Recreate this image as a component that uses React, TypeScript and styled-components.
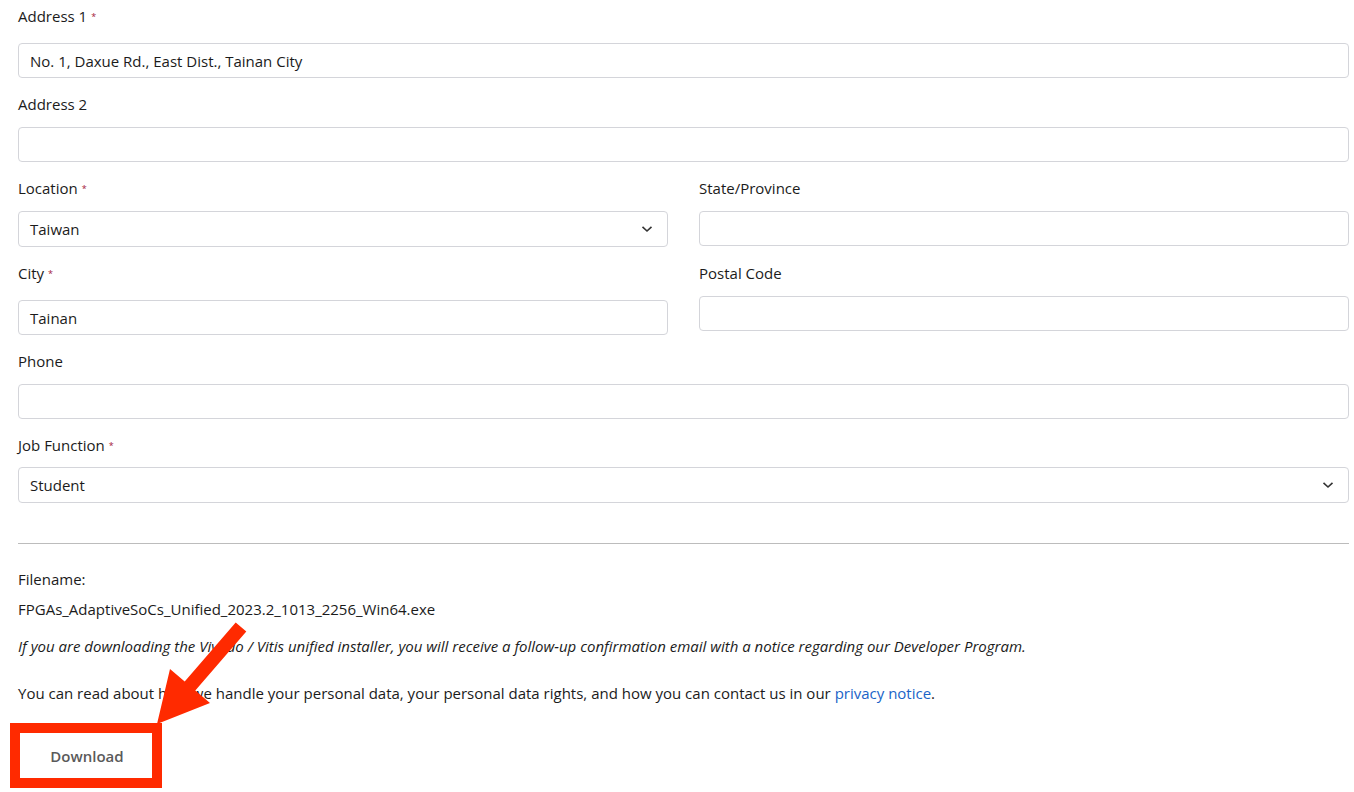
import { createGlobalStyle } from 'styled-components';
import styled from 'styled-components';

const GlobalStyle = createGlobalStyle`
	html, body {
		margin: 0;
		padding: 0;
		background: #ffffff;
	}
	body {
		font-family: "Open Sans", "Noto Sans", "Liberation Sans", sans-serif;
		font-size: 15px;
		color: #1b1b1b;
	}
`;

const Page = styled.div`
	position: relative;
	padding: 5px 5px 0 18px;
	width: 1354px;
	box-sizing: border-box;
`;

const Field = styled.div`
	display: flex;
	flex-direction: column;
	margin-bottom: 15px;
`;

const Row = styled.div`
	display: grid;
	grid-template-columns: 1fr 1fr;
	column-gap: 31px;
`;

const Label = styled.label<{ $required?: boolean; $tight?: boolean }>`
	display: block;
	line-height: 22px;
	margin-bottom: ${({ $required, $tight }) => ($tight ? '10px' : $required ? '15px' : '12px')};
	color: #1b1b1b;
`;

const Star = styled.span`
	color: #a3173a;
	font-size: 9px;
	margin-left: 4px;
	vertical-align: 2px;
`;

const TextInput = styled.div`
	box-sizing: border-box;
	height: 35px;
	border: 1px solid #d4d5da;
	border-radius: 4px;
	padding: 0 11px;
	display: flex;
	align-items: center;
	color: #1b1b1b;
	background: #fff;
`;

const SelectBox = styled(TextInput)`
	justify-content: space-between;
	padding-right: 14px;
	height: 36px;
`;

const Divider = styled.hr`
	border: none;
	border-top: 1px solid #bcbcbc;
	margin: 40px 0 24px;
`;

const Text = styled.p<{ $gap?: number }>`
	margin: 0 0 ${({ $gap }) => $gap ?? 8}px;
	line-height: 22px;
`;

const Note = styled(Text)`
	font-style: italic;
`;

const Link = styled.a`
	color: #1a64c8;
	text-decoration: none;
`;

const Frame = styled.span`
	display: inline-block;
	margin-left: -8px;
	margin-top: 19px;
	border: 10px solid #ff2a00;
	line-height: 0;
`;

const DownloadButton = styled.button`
	width: 132px;
	height: 45px;
	border: none;
	background: #ffffff;
	color: #5a5a5a;
	font-family: "Open Sans", "Noto Sans", sans-serif;
	font-size: 15px;
	font-weight: 600;
	padding: 0 0 0 2px;
	cursor: pointer;
`;

const Arrow = styled.svg`
	position: absolute;
	left: 0;
	top: 0;
	pointer-events: none;
`;

function Chevron() {
	return (
		<svg width="12" height="8" viewBox="0 0 12 8">
			<polyline points="1.5,1.8 6,6 10.5,1.8" fill="none" stroke="#333" strokeWidth="1.6" />
		</svg>
	);
}

export default function App() {
	return (
		<>
			<GlobalStyle />
			<Page>
				<Field>
					<Label $required>Address 1<Star>*</Star></Label>
					<TextInput>No. 1, Daxue Rd., East Dist., Tainan City</TextInput>
				</Field>
				<Field>
					<Label>Address 2</Label>
					<TextInput />
				</Field>
				<Row>
					<Field>
						<Label $required style={{ marginBottom: 11 }}>Location<Star>*</Star></Label>
						<SelectBox>Taiwan<Chevron /></SelectBox>
					</Field>
					<Field>
						<Label>State/Province</Label>
						<TextInput />
					</Field>
				</Row>
				<Row>
					<Field>
						<Label $required>City<Star>*</Star></Label>
						<TextInput>Tainan</TextInput>
					</Field>
					<Field>
						<Label>Postal Code</Label>
						<TextInput />
					</Field>
				</Row>
				<Field>
					<Label>Phone</Label>
					<TextInput />
				</Field>
				<Field>
					<Label $required $tight>Job Function<Star>*</Star></Label>
					<SelectBox>Student<Chevron /></SelectBox>
				</Field>

				<Divider />

				<Text>Filename:</Text>
				<Text $gap={15}>FPGAs_AdaptiveSoCs_Unified_2023.2_1013_2256_Win64.exe</Text>
				<Note $gap={25}>
					If you are downloading the Vivado / Vitis unified installer, you will receive a follow-up confirmation email with a notice regarding our Developer Program.
				</Note>
				<Text $gap={0}>
					You can read about how we handle your personal data, your personal data rights, and how you can contact us in our <Link href="#">privacy notice</Link>.
				</Text>

				<Frame>
					<DownloadButton>Download</DownloadButton>
				</Frame>

				<Arrow width="1354" height="792" viewBox="0 0 1354 792">
					<polygon
						points="246.3,631.6 235.7,622.4 184.7,681.4 170,669 157,724 210,703 195.3,690.6"
						fill="#ff2a00"
					/>
				</Arrow>
			</Page>
		</>
	);
}
